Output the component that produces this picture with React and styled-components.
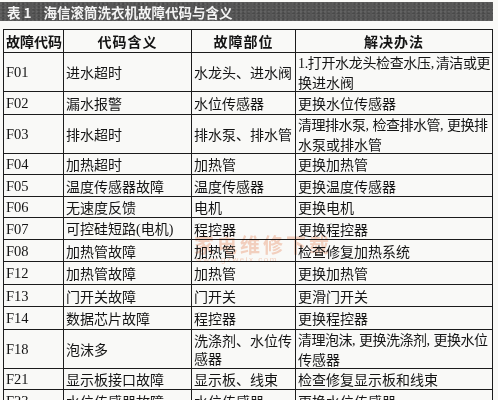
import React from "react";
import styled, { createGlobalStyle } from "styled-components";

const Global = createGlobalStyle`
  html, body { margin: 0; padding: 0; background: #f9f9f7; }
  body { font-family: "Noto Sans CJK SC", "Noto Sans", sans-serif; color: #141414; }
`;

const Page = styled.div`
  position: relative;
  width: 498px;
  height: 400px;
  overflow: hidden;
  padding-top: 2px;
  box-sizing: border-box;
`;

const TitleBar = styled.div`
  width: 493px;
  height: 19px;
  background: #565656;
  background-image:
    radial-gradient(circle at 20% 40%, rgba(255,255,255,0.08) 0 1px, transparent 1.5px),
    radial-gradient(circle at 70% 70%, rgba(0,0,0,0.15) 0 1px, transparent 1.5px);
  background-size: 4px 4px, 5px 3px;
  display: flex;
  align-items: center;
  padding-left: 7px;
  box-sizing: border-box;
  color: #f4f4f4;
  font-weight: 700;
  font-size: 13.5px;
  white-space: nowrap;
`;

const TitleNum = styled.span`
  margin-right: 12px;
`;

const Table = styled.table`
  margin: 8px 0 0 3px;
  width: 489px;
  border-collapse: collapse;
  table-layout: fixed;
`;

const Row = styled.tr`
  height: ${(p) => p.$h}px;
`;

const Head = styled.th`
  border: 1px solid #1c1c1c;
  font-weight: 700;
  font-size: 14px;
  letter-spacing: ${(p) => (p.$left ? "0px" : "1px")};
  text-align: ${(p) => (p.$left ? "left" : "center")};
  padding: 0 2px;
  white-space: nowrap;
  line-height: 18px;
`;

const Cell = styled.td`
  border: 1px solid #1c1c1c;
  line-height: 18px;
  padding: 0 2px;
  vertical-align: middle;
  white-space: nowrap;
  overflow: hidden;
  font-family: ${(p) =>
    p.$code ? '"Liberation Serif", serif' : '"Noto Sans CJK SC", "Noto Sans", sans-serif'};
  font-size: ${(p) => (p.$code ? "14.5px" : "14px")};
`;

const Comma = styled.span`
  display: inline-block;
  width: ${(p) => p.$w || 7}px;
  font-family: "Liberation Serif", serif;
`;

const Tight = styled.span`
  letter-spacing: ${(p) => p.$ls || -0.5}px;
`;

const Latin = styled.span`
  font-family: "Liberation Serif", serif;
`;

const Watermark = styled.div`
  position: absolute;
  left: 194px;
  top: 235px;
  pointer-events: none;
  mix-blend-mode: multiply;
  color: rgba(240, 160, 125, 0.45);
  display: flex;
  flex-direction: column;
  align-items: flex-start;
`;

const WmBig = styled.div`
  font-family: "Noto Sans CJK SC", sans-serif;
  font-weight: 700;
  font-size: 20px;
  letter-spacing: 3px;
  line-height: 20px;
`;

const WmSmall = styled.div`
  font-family: "Liberation Sans", sans-serif;
  font-size: 8px;
  letter-spacing: 1.5px;
  line-height: 9px;
  margin-left: 2px;
`;

const c = (w) => <Comma $w={w}>,</Comma>;

const rows = [
  {
    code: "F01",
    h: 36,
    meaning: "进水超时",
    part: "水龙头、进水阀",
    fix: (
      <>
        <Tight $ls={-0.35}>
          <Latin>1.</Latin>打开水龙头检查水压{c(5)}清洁或更
        </Tight>
        <br />
        换进水阀
      </>
    ),
  },
  { code: "F02", h: 23, meaning: "漏水报警", part: "水位传感器", fix: "更换水位传感器" },
  {
    code: "F03",
    h: 38,
    meaning: "排水超时",
    part: "排水泵、排水管",
    fix: (
      <>
        <Tight>
          清理排水泵{c()}检查排水管{c()}更换排
        </Tight>
        <br />
        水泵或排水管
      </>
    ),
  },
  { code: "F04", h: 21, meaning: "加热超时", part: "加热管", fix: "更换加热管" },
  { code: "F05", h: 22, meaning: "温度传感器故障", part: "温度传感器", fix: "更换温度传感器" },
  { code: "F06", h: 21, meaning: "无速度反馈", part: "电机", fix: "更换电机" },
  {
    code: "F07",
    h: 22,
    meaning: (
      <>
        可控硅短路<Latin>(</Latin>电机<Latin>)</Latin>
      </>
    ),
    part: "程控器",
    fix: "更换程控器",
  },
  { code: "F08", h: 22, meaning: "加热管故障", part: "加热管", fix: "检查修复加热系统" },
  { code: "F12", h: 23, meaning: "加热管故障", part: "加热管", fix: "更换加热管" },
  { code: "F13", h: 22, meaning: "门开关故障", part: "门开关", fix: "更滑门开关" },
  { code: "F14", h: 23, meaning: "数据芯片故障", part: "程控器", fix: "更换程控器" },
  {
    code: "F18",
    h: 37,
    meaning: "泡沫多",
    part: (
      <>
        洗涤剂、水位传
        <br />
        感器
      </>
    ),
    fix: (
      <>
        <Tight>
          清理泡沫{c()}更换洗涤剂{c()}更换水位
        </Tight>
        <br />
        传感器
      </>
    ),
  },
  { code: "F21", h: 21, meaning: "显示板接口故障", part: "显示板、线束", fix: "检查修复显示板和线束" },
  { code: "F23", h: 22, meaning: "水位传感器故障", part: "水位传感器", fix: "更换水位传感器" },
];

export default function App() {
  return (
    <>
      <Global />
      <Page>
        <TitleBar>
          <TitleNum>表 1</TitleNum>
          海信滚筒洗衣机故障代码与含义
        </TitleBar>
        <Table>
          <colgroup>
            <col style={{ width: 60 }} />
            <col style={{ width: 128 }} />
            <col style={{ width: 104 }} />
            <col style={{ width: 197 }} />
          </colgroup>
          <thead>
            <Row $h={23}>
              <Head $left>故障代码</Head>
              <Head>代码含义</Head>
              <Head>故障部位</Head>
              <Head>解决办法</Head>
            </Row>
          </thead>
          <tbody>
            {rows.map((r) => (
              <Row key={r.code} $h={r.h}>
                <Cell $code>{r.code}</Cell>
                <Cell>{r.meaning}</Cell>
                <Cell>{r.part}</Cell>
                <Cell>{r.fix}</Cell>
              </Row>
            ))}
          </tbody>
        </Table>
        <Watermark>
          <WmBig>家电维修下载</WmBig>
          <WmSmall>www.gzweix.com</WmSmall>
        </Watermark>
      </Page>
    </>
  );
}
